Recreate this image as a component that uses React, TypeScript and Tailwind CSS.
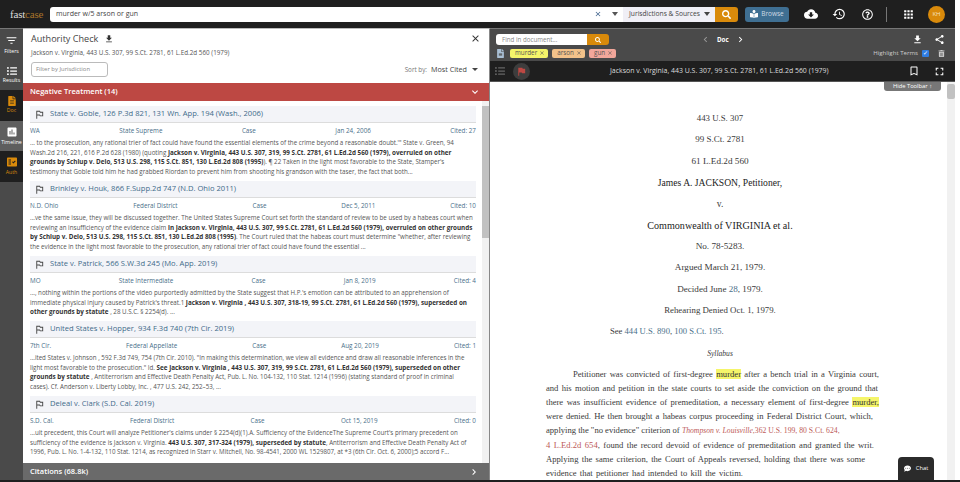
import type { ReactNode } from 'react';
import {
  FaBookReader,
  FaCommentDots,
  FaFileAlt,
  FaListUl,
  FaRegQuestionCircle,
  FaSearch,
  FaTrashAlt,
} from 'react-icons/fa';
import {
  MdApps,
  MdAssessment,
  MdBookmarkBorder,
  MdClose,
  MdCloudDownload,
  MdFactCheck,
  MdFileDownload,
  MdFilterList,
  MdFlag,
  MdFullscreen,
  MdHistory,
  MdKeyboardArrowDown,
  MdKeyboardArrowLeft,
  MdKeyboardArrowRight,
  MdOutlinedFlag,
  MdShare,
} from 'react-icons/md';

interface Case {
  title: string;
  meta: string[];
  height: string;
  body: ReactNode;
}

const cases: Case[] = [
  {
    title: 'State v. Goble, 126 P.3d 821, 131 Wn. App. 194 (Wash., 2006)',
    meta: ['WA', 'State Supreme', 'Case', 'Jan 24, 2006', 'Cited: 27'],
    height: 'h-[75px]',
    body: (
      <>
        ... to the prosecution, any rational trier of fact could have found the essential elements of the crime beyond a reasonable doubt.'" State v. Green, 94 Wash.2d 216, 221, 616 P.2d 628 (1980) (quoting <b>Jackson v. Virginia, 443 U.S. 307, 319, 99 S.Ct. 2781, 61 L.Ed.2d 560 (1979), overruled on other grounds by Schlup v. Delo, 513 U.S. 298, 115 S.Ct. 851, 130 L.Ed.2d 808 (1995)</b>). ¶ 22 Taken in the light most favorable to the State, Stamper's
        <br />
        testimony that Goble told him he had grabbed Riordan to prevent him from shooting his grandson with the taser, the fact that both...
      </>
    ),
  },
  {
    title: 'Brinkley v. Houk, 866 F.Supp.2d 747 (N.D. Ohio 2011)',
    meta: ['N.D. Ohio', 'Federal District', 'Case', 'Dec 5, 2011', 'Cited: 10'],
    height: 'h-[75px]',
    body: (
      <>
        ...ve the same issue, they will be discussed together. The United States Supreme Court set forth the standard of review to be used by a habeas court when reviewing an insufficiency of the evidence claim <b>in Jackson v. Virginia, 443 U.S. 307, 99 S.Ct. 2781, 61 L.Ed.2d 560 (1979), overruled on other grounds by Schlup v. Delo, 513 U.S. 298, 115 S.Ct. 851, 130 L.Ed.2d 808 (1995)</b>. The Court ruled that the habeas court must determine "whether, after reviewing the evidence in the light most favorable to the prosecution, any rational trier of fact could have found the essential ...
      </>
    ),
  },
  {
    title: 'State v. Patrick, 566 S.W.3d 245 (Mo. App. 2019)',
    meta: ['MO', 'State Intermediate', 'Case', 'Jan 8, 2019', 'Cited: 4'],
    height: 'h-[65px]',
    body: (
      <>
        ..., nothing within the portions of the video purportedly admitted by the State suggest that H.P.'s emotion can be attributed to an apprehension of immediate physical injury caused by Patrick's threat.1 <b>Jackson v. Virginia , 443 U.S. 307, 318-19, 99 S.Ct. 2781, 61 L.Ed.2d 560 (1979), superseded on other grounds by statute</b> , 28 U.S.C. § 2254(d). ...
      </>
    ),
  },
  {
    title: 'United States v. Hopper, 934 F.3d 740 (7th Cir. 2019)',
    meta: ['7th Cir.', 'Federal Appellate', 'Case', 'Aug 20, 2019', 'Cited: 1'],
    height: 'h-[75px]',
    body: (
      <>
        ...ited States v. Johnson , 592 F.3d 749, 754 (7th Cir. 2010). "In making this determination, we view all evidence and draw all reasonable inferences in the light most favorable to the prosecution." Id. <b>See Jackson v. Virginia , 443 U.S. 307, 319, 99 S.Ct. 2781, 61 L.Ed.2d 560 (1979), superseded on other grounds by statute</b> , Antiterrorism and Effective Death Penalty Act, Pub. L. No. 104-132, 110 Stat. 1214 (1996) (stating standard of proof in criminal
        <br />
        cases). Cf. Anderson v. Liberty Lobby, Inc. , 477 U.S. 242, 252–53, ...
      </>
    ),
  },
  {
    title: 'Deleal v. Clark (S.D. Cal. 2019)',
    meta: ['S.D. Cal.', 'Federal District', 'Case', 'Oct 15, 2019', 'Cited: 0'],
    height: 'h-[65px]',
    body: (
      <>
        ...uit precedent, this Court will analyze Petitioner's claims under § 2254(d)(1).A. Sufficiency of the EvidenceThe Supreme Court's primary precedent on sufficiency of the evidence is Jackson v. Virginia. <b>443 U.S. 307, 317-324 (1979), superseded by statute</b>, Antiterrorism and Effective Death Penalty Act of 1996, Pub. L. No. 1-4-132, 110 Stat. 1214, as recognized in Starr v. Mitchell, No. 98-4541, 2000 WL 1529807, at *3 (6th Cir. Oct. 6, 2000);5 accord F...
      </>
    ),
  },
];

function NavItem({ label, icon, active, light }: { label: string; icon: ReactNode; active?: boolean; light?: boolean }) {
  const bg = active ? 'bg-[#1f1f1f]' : light ? 'bg-[#5e5e5e]' : '';
  const color = active ? 'text-[#d98a0b]' : 'text-white';
  return (
    <div className={`h-[30.5px] flex flex-col items-center justify-center ${bg} ${color}`}>
      {icon}
      <span className="text-[5.2px] leading-[7px] mt-[1px] whitespace-nowrap">{label}</span>
    </div>
  );
}

function CaseCard({ item }: { item: Case }) {
  return (
    <div className={item.height}>
      <div className="h-[17px] bg-[#f3f4f8] border-b border-[#dcdcdc] flex items-center pl-[4px]">
        <MdOutlinedFlag size={11} className="text-[#444] mr-[5px]" />
        <span className="text-[7.6px] text-[#3f6b8a] font-medium">{item.title}</span>
      </div>
      <div className="flex justify-between h-[14px] items-center mt-[1px] text-[6.3px] text-[#4a6f8a]">
        {item.meta.map((m) => (
          <span key={m}>{m}</span>
        ))}
      </div>
      <p className="text-[6.2px] leading-[9.6px] text-[#555] [&_b]:text-[#333] [&_b]:text-[6.3px]">{item.body}</p>
    </div>
  );
}

function Term({ label, color }: { label: string; color: string }) {
  return (
    <span className={`h-[9px] pl-[5px] pr-[3px] rounded-[2px] flex items-center gap-[2px] text-[6.3px] text-[#555] ${color}`}>
      {label}
      <MdClose size={6} />
    </span>
  );
}

function Link({ children }: { children: ReactNode }) {
  return <span className="text-[#bd5a57]">{children}</span>;
}

function Blue({ children }: { children: ReactNode }) {
  return <span className="text-[#4a6f8a]">{children}</span>;
}

function Hit({ children }: { children: ReactNode }) {
  return <mark className="bg-[#f5f56a] text-[#333]">{children}</mark>;
}

// each line of the syllabus keeps the right edge it has in the document
function Line({ className, children }: { className: string; children: ReactNode }) {
  return <div className={`${className} [text-align:justify] [text-align-last:justify]`}>{children}</div>;
}

export default function App() {
  return (
    <div className="w-[960px] h-[482px] overflow-hidden bg-white font-['Open_Sans',sans-serif]">
      <div className="w-[955px] h-[480px] flex flex-col">
        <header className="h-[28px] shrink-0 bg-[#1f1f1f] flex items-center">
          <div className="w-[50px] pl-[10px] text-[11px] tracking-[-0.2px] font-['Liberation_Serif',serif]">
            <span className="text-[#ddd]">fast</span>
            <span className="text-[#a8742a]">case</span>
          </div>
          <div className="w-[573px] h-[15px] bg-white rounded-l-[3px] flex items-center pl-[6px] pr-[2px] text-[7px] text-[#444]">
            <span className="flex-1">murder w/5 arson or gun</span>
            <MdClose size={8} className="text-[#3b5f8a] mr-[10px]" />
            <span className="w-0 h-0 border-x-[3px] border-x-transparent border-t-[4px] border-t-[#555] mr-[3px]" />
          </div>
          <div className="w-[92px] h-[15px] bg-[#f0eff6] flex items-center pl-[6px] text-[6.7px] text-[#444] whitespace-nowrap">
            Jurisdictions &amp; Sources
            <span className="ml-[4px] w-0 h-0 border-x-[3px] border-x-transparent border-t-[4px] border-t-[#444]" />
          </div>
          <div className="w-[23px] h-[15px] bg-[#d98a0b] rounded-r-[3px] flex items-center justify-center text-white">
            <FaSearch size={9} />
          </div>
          <div className="ml-[7px] w-[44px] h-[15px] bg-[#3f6f92] rounded-[3px] flex items-center justify-center gap-[3px] text-[6.5px] text-[#cfdbe5]">
            <FaBookReader size={8} className="text-white" />
            Browse
          </div>
          <MdCloudDownload size={14} className="ml-[15px] text-white" />
          <MdHistory size={14} className="ml-[14px] text-white" />
          <FaRegQuestionCircle size={11} className="ml-[16px] text-white" />
          <div className="ml-[13px] w-px h-[15px] bg-[#777]" />
          <MdApps size={13} className="ml-[15px] text-white" />
          <div className="ml-[13px] w-[17px] h-[17px] rounded-full bg-[#d98a0b] text-[6px] text-[#f6e3c0] flex items-center justify-center">
            KH
          </div>
        </header>

        <div className="flex-1 flex min-h-0">
          <nav className="w-[23px] shrink-0 bg-[#4a4a4a] border-t border-[#777]">
            <NavItem label="Filters" icon={<MdFilterList size={13} />} />
            <NavItem label="Results" icon={<FaListUl size={10} />} />
            <NavItem label="Doc" active icon={<FaFileAlt size={10} />} />
            <NavItem label="Timeline" light icon={<MdAssessment size={12} />} />
            <NavItem label="Auth" active icon={<MdFactCheck size={12} />} />
          </nav>

          <section className="w-[467px] shrink-0 flex flex-col min-h-0 border-t border-[#bbb] border-r border-r-[#888]">
            <div className="h-[54px] shrink-0 px-[8px] pt-[2px]">
              <div className="flex items-center gap-[6px] h-[15px]">
                <h1 className="text-[9.1px] font-medium text-[#444]">Authority Check</h1>
                <MdFileDownload size={10} className="text-[#333]" />
                <MdClose size={11} className="ml-auto text-[#333]" />
              </div>
              <p className="mt-[2px] text-[6.3px] leading-[10px] text-[#555]">
                Jackson v. Virginia, 443 U.S. 307, 99 S.Ct. 2781, 61 L.Ed.2d 560 (1979)
              </p>
              <div className="flex items-center justify-between mt-[4px]">
                <div className="w-[77px] h-[15px] border border-[#bbb] rounded-[3px] pl-[4px] flex items-center text-[5.9px] text-[#888]">
                  Filter by Jurisdiction
                </div>
                <div className="flex items-center mr-[3px] text-[7.2px] text-[#444]">
                  <span className="text-[6.3px] text-[#777] mr-[4px]">Sort by:</span>
                  Most Cited
                  <span className="ml-[5px] w-0 h-0 border-x-[3px] border-x-transparent border-t-[3px] border-t-[#444]" />
                </div>
              </div>
            </div>

            <div className="h-[18px] shrink-0 bg-[#bd4843] flex items-center justify-between pl-[7px] pr-[8px] text-white text-[7.5px] font-semibold">
              Negative Treatment (14)
              <MdKeyboardArrowDown size={12} />
            </div>

            <div className="flex-1 min-h-0 flex overflow-hidden">
              <div className="flex-1 pl-[7px] pr-[6px] pt-[5px] overflow-hidden">
                {cases.map((c) => (
                  <CaseCard key={c.title} item={c} />
                ))}
              </div>
              <div className="w-[7px] bg-[#f1f1f1] pt-[5px]">
                <div className="h-[132px] bg-[#c1c1c1]" />
              </div>
            </div>

            <div className="h-[17px] shrink-0 bg-[#6a6a6a] flex items-center justify-between pl-[7px] pr-[9px] text-white text-[7.5px] font-semibold">
              Citations (68.8k)
              <MdKeyboardArrowRight size={12} />
            </div>
          </section>

          <section className="flex-1 flex flex-col min-h-0">
            <div className="h-[33px] shrink-0 bg-[#4a4a4a] border-t border-[#777] flex flex-col pl-[6px] pr-[10px]">
              <div className="flex items-center h-[15px] mt-[3px]">
                <div className="w-[91px] h-[11px] bg-white rounded-l-[3px] pl-[6px] flex items-center text-[6.2px] text-[#888]">
                  Find in document...
                </div>
                <div className="w-[22px] h-[11px] bg-[#d98a0b] rounded-r-[3px] flex items-center justify-center text-white">
                  <FaSearch size={6} />
                </div>
                <MdKeyboardArrowLeft size={11} className="ml-[91px] text-[#999]" />
                <span className="ml-[6px] text-[6.2px] font-bold text-white">Doc</span>
                <MdKeyboardArrowRight size={11} className="ml-[6px] text-white" />
                <MdFileDownload size={11} className="ml-auto text-white" />
                <MdShare size={11} className="ml-[11px] text-white" />
              </div>
              <div className="flex items-center gap-[4px] h-[12px]">
                <FaFileAlt size={9} className="text-[#a9bfd4] mr-[1px]" />
                <Term label="murder" color="bg-[#f5f56a]" />
                <Term label="arson" color="bg-[#f3c28a]" />
                <Term label="gun" color="bg-[#f2a79b]" />
                <span className="ml-auto text-[6.1px] text-[#ccc]">Highlight Terms</span>
                <span className="w-[7px] h-[7px] bg-[#2f7de1] rounded-[1px] text-white text-[6px] leading-[7px] text-center">✓</span>
                <FaTrashAlt size={7} className="ml-[5px] text-[#ccc]" />
              </div>
            </div>

            <div className="h-[21px] shrink-0 bg-[#1f1f1f] flex items-center pl-[5px] pr-[9px] text-[6.95px] text-[#ddd] border-b border-[#555]">
              <FaListUl size={10} className="text-[#666]" />
              <div className="ml-[8px] w-[17px] h-[17px] rounded-full bg-[#3d3d3d] flex items-center justify-center">
                <MdFlag size={11} className="text-[#bd4843]" />
              </div>
              <span className="ml-[80px]">Jackson v. Virginia, 443 U.S. 307, 99 S.Ct. 2781, 61 L.Ed.2d 560 (1979)</span>
              <MdBookmarkBorder size={12} className="ml-auto text-white" />
              <MdFullscreen size={13} className="ml-[13px] text-white" />
            </div>

            <div className="flex-1 min-h-0 flex overflow-hidden">
              <div className="flex-1 relative overflow-hidden">
                <div className="absolute top-0 right-[6px] w-[57px] h-[9px] bg-[#777] rounded-b-[3px] text-[5.8px] leading-[9px] text-center text-white">
                  Hide Toolbar ↑
                </div>
                <div className="w-[336px] ml-[56px] mt-[26px] font-['Liberation_Serif',serif] text-[#3a3a3a]">
                  <div className="pl-[12px] text-center leading-[21.35px]">
                    <div className="text-[8.8px]">443 U.S. 307</div>
                    <div className="text-[9px]">99 S.Ct. 2781</div>
                    <div className="text-[9.2px]">61 L.Ed.2d 560</div>
                    <div className="text-[9.6px] text-[#222]">James A. JACKSON, Petitioner,</div>
                    <div className="text-[9.6px]">v.</div>
                    <div className="text-[10.1px] text-[#222]">Commonwealth of VIRGINIA et al.</div>
                    <div className="text-[9.2px]">No. 78-5283.</div>
                    <div className="text-[9.2px]">Argued March 21, 1979.</div>
                    <div className="text-[9.1px]">Decided June <Blue>28</Blue>, 1979.</div>
                    <div className="text-[8.8px]">Rehearing Denied Oct. 1, 1979.</div>
                  </div>
                  <div className="pl-[64px] text-[8.6px] leading-[21.35px]">
                    See <Blue>444 U.S. 890</Blue>, <Blue>100 S.Ct. 195</Blue>.
                  </div>
                  <div className="pl-[12px] text-center italic text-[7.6px] leading-[21.35px]">Syllabus</div>
                  <div className="text-[8.6px] leading-[14px] pt-[3px]">
                    <Line className="ml-[27px] w-[306px]">
                      Petitioner was convicted of first-degree <Hit>murder</Hit> after a bench trial in a Virginia court,
                    </Line>
                    <Line className="w-[332px]">and his motion and petition in the state courts to set aside the conviction on the ground that</Line>
                    <Line className="w-[333px]">
                      there was insufficient evidence of premeditation, a necessary element of first-degree <Hit>murder,</Hit>
                    </Line>
                    <Line className="w-[327px]">were denied. He then brought a habeas corpus proceeding in Federal District Court, which,</Line>
                    <div className="whitespace-nowrap">
                      applying the "no evidence" criterion of{' '}
                      <span className="text-[7.7px]">
                        <Link><i>Thompson v. Louisville</i>,362 U.S. 199, 80 S.Ct. 624,</Link>
                      </span>
                    </div>
                    <Line className="w-[328px]">
                      <Link>4 L.Ed.2d 654</Link>, found the record devoid of evidence of premeditation and granted the writ.
                    </Line>
                    <Line className="w-[319px]">Applying the same criterion, the Court of Appeals reversed, holding that there was some</Line>
                    <Line className="w-[197px]">evidence that petitioner had intended to kill the victim.</Line>
                  </div>
                </div>
                <div className="absolute right-[13px] bottom-0 w-[36px] h-[23px] bg-[#2b2b2b] rounded-t-[4px] flex items-center justify-center gap-[5px] text-[5.8px] text-white">
                  <FaCommentDots size={7} />
                  Chat
                </div>
              </div>
              <div className="w-[8px] bg-[#f1f1f1] pt-[2px]">
                <div className="h-[15px] bg-[#c1c1c1] rounded-[2px]" />
              </div>
            </div>
          </section>
        </div>
      </div>
      <div className="h-[2px] bg-[#1f1f1f]" />
    </div>
  );
}
